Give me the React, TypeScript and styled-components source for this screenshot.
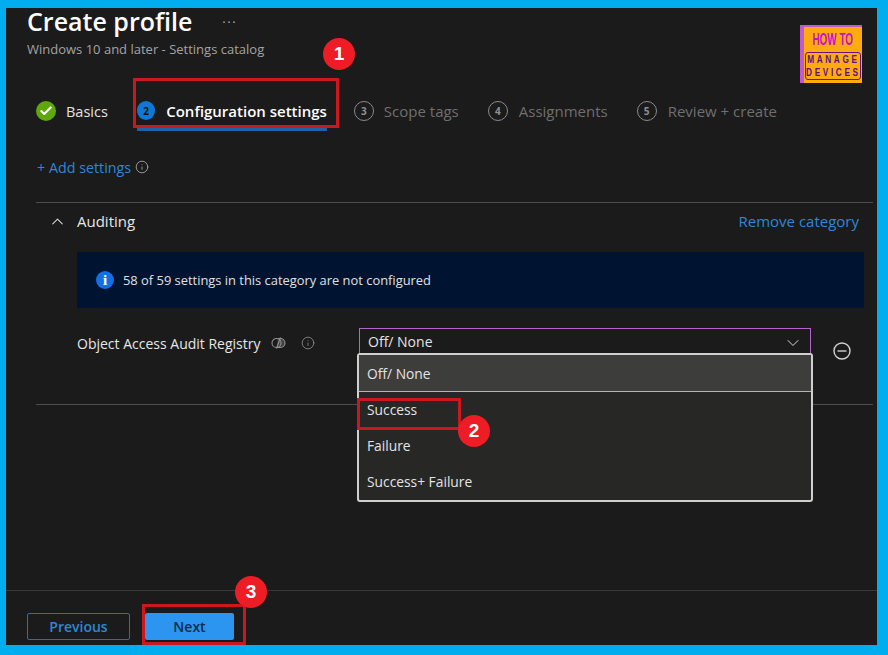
import styled, {createGlobalStyle} from "styled-components";
import {Check, ChevronDown, ChevronUp, Info} from "lucide-react";

const GlobalStyle = createGlobalStyle`
  html, body {
    margin: 0;
    padding: 0;
    background: #00aeef;
    font-family: "Open Sans", "Noto Sans", "Liberation Sans", sans-serif;
  }
`;

const Frame = styled.div`
  width: 888px;
  height: 655px;
  box-sizing: border-box;
  padding: 8px 11px 10px 6px;
  background: #00aeef;
  overflow: hidden;
`;

const Panel = styled.div`
  position: relative;
  height: 100%;
  display: flex;
  flex-direction: column;
  background: #1b1b1b;
  color: #e6e6e6;
`;

const Header = styled.header`
  display: flex;
  justify-content: space-between;
  padding: 0 15px 0 21px;
  height: 85px;
`;

const TitleRow = styled.div`
  display: flex;
  align-items: center;
  gap: 30px;
  height: 29px;
  margin-top: -1px;
`;

const Title = styled.h1`
  margin: 0;
  font-size: 25px;
  line-height: 29px;
  font-weight: 600;
  color: #fff;
`;

const More = styled.span`
  font-size: 13px;
  line-height: 14px;
  letter-spacing: 1.5px;
  color: #a8a8a8;
`;

const Subtitle = styled.div`
  margin-top: 4px;
  font-size: 13px;
  line-height: 18px;
  color: #a3a3a3;
`;

const Logo = styled.div`
  width: 62px;
  height: 58px;
  margin-top: 17px;
  box-sizing: border-box;
  background: #ffab0f;
  border-left: 4px solid #c05ac8;
  border-top: 2px solid #c05ac8;
  display: flex;
  flex-direction: column;
  align-items: center;
  font-family: "Liberation Sans", sans-serif;
  font-weight: 700;
`;

const LogoTop = styled.div`
  margin-top: 5px;
  font-size: 16px;
  line-height: 16px;
  color: #c413c4;
  transform: scaleX(0.62);
  white-space: nowrap;
`;

const LogoBottom = styled.div`
  margin-top: 4px;
  width: 56px;
  height: 28px;
  box-sizing: border-box;
  border: 1px solid #6a1280;
  border-radius: 3px;
  display: flex;
  justify-content: center;
  align-items: center;
  overflow: visible;
`;

const LogoLines = styled.div`
  font-size: 11px;
  line-height: 13px;
  color: #5b0f8a;
  text-align: center;
  letter-spacing: 3.5px;
  white-space: nowrap;
  transform: scaleX(0.75);
`;

const Steps = styled.nav`
  display: flex;
  align-items: center;
  height: 36px;
  padding-left: 30px;
`;

const Step = styled.div<{$gap: number}>`
  display: flex;
  align-items: center;
  height: 36px;
  margin-right: ${p => p.$gap}px;
`;

const StepDone = styled.span`
  width: 20px;
  height: 20px;
  border-radius: 50%;
  background: #5ea80d;
  display: flex;
  align-items: center;
  justify-content: center;
  color: #fff;
`;

const StepActive = styled.span`
  width: 19px;
  height: 19px;
  border-radius: 50%;
  background: #0f78d4;
  display: flex;
  align-items: center;
  justify-content: center;
  font-size: 10px;
  font-weight: 700;
  color: #111;
`;

const StepIdle = styled.span`
  width: 18px;
  height: 18px;
  border-radius: 50%;
  border: 1.5px solid #8a8a8a;
  display: flex;
  align-items: center;
  justify-content: center;
  font-size: 10px;
  font-weight: 700;
  color: #8f8f8f;
`;

const StepLabel = styled.span<{$tone: "done" | "active" | "idle"; $gap: number}>`
  margin-left: ${p => p.$gap}px;
  font-size: ${p => (p.$tone === "done" ? "14.5px" : "15px")};
  white-space: nowrap;
  font-weight: ${p => (p.$tone === "active" ? 600 : 400)};
  color: ${p => (p.$tone === "active" ? "#fff" : p.$tone === "done" ? "#e3e3e3" : "#6f6f6f")};
`;

const ActiveStep = styled(Step)`
  height: 38px;
  margin-top: 2px;
  width: 190px;
  box-sizing: border-box;
  border-bottom: 3px solid #1d62ab;
`;

const AddSettings = styled.div`
  display: flex;
  align-items: center;
  gap: 4px;
  margin: 27px 0 0 31px;
  height: 22px;
  font-size: 14.3px;
  color: #2f86d8;
`;

const InfoIcon = styled(Info)`
  color: #a5a5a5;
  flex: none;
`;

const Category = styled.section`
  margin: 24px 4px 0 30px;
  border-top: 1px solid #4d4d4d;
  border-bottom: 1px solid #4d4d4d;
  height: 201px;
`;

const CategoryHead = styled.div`
  display: flex;
  align-items: center;
  height: 36px;
  padding: 0 14px 0 12px;
  font-size: 15px;
`;

const CategoryName = styled.span`
  margin-left: 10px;
  flex: 1;
  color: #e6e6e6;
`;

const RemoveLink = styled.a`
  color: #2f86d8;
  font-size: 15px;
`;

const Banner = styled.div`
  margin: 13px 9px 0 41px;
  height: 56px;
  background: #001331;
  display: flex;
  align-items: center;
  padding-left: 19px;
  gap: 9px;
  font-size: 12.9px;
  color: #e0e0e0;
`;

const BannerDot = styled.span`
  width: 18px;
  height: 18px;
  border-radius: 50%;
  background: #1470e0;
  color: #fff;
  display: flex;
  align-items: center;
  justify-content: center;
  font-family: "Liberation Serif", serif;
  font-weight: 700;
  font-size: 15px;
`;

const SettingRow = styled.div`
  display: flex;
  align-items: flex-start;
  margin: 20px 0 0 41px;
`;

const SettingLabel = styled.div`
  width: 282px;
  height: 30px;
  display: flex;
  align-items: center;
  font-size: 14px;
  color: #e6e6e6;
`;

const SettingIcons = styled.span`
  display: flex;
  align-items: center;
  gap: 15px;
  margin-left: 10px;
  color: #8f8f8f;
`;

const SelectBox = styled.div`
  position: relative;
  width: 452px;
  height: 30px;
  box-sizing: border-box;
  border: 1px solid #b565c9;
  border-bottom: none;
  display: flex;
  align-items: center;
  justify-content: space-between;
  padding: 0 7px 4px 8px;
  font-size: 14px;
  color: #e3e3e3;
`;

const SelectArrow = styled(ChevronDown)`
  color: #d8d8d8;
  margin-top: 2px;
`;

const Menu = styled.div`
  position: absolute;
  left: -3px;
  top: 24px;
  width: 456px;
  height: 149px;
  box-sizing: border-box;
  border: 2px solid #cfcfcf;
  border-radius: 3px;
  background: #272726;
  z-index: 2;
`;

const MenuItem = styled.div<{$selected?: boolean}>`
  height: 36px;
  box-sizing: ${p => (p.$selected ? "content-box" : "border-box")};
  display: flex;
  align-items: center;
  padding: ${p => (p.$selected ? "0 0 0 8px" : "0 0 2px 8px")};
  font-size: 13.8px;
  color: #e3e3e3;
  background: ${p => (p.$selected ? "#3d3d3b" : "transparent")};
  border-bottom: ${p => (p.$selected ? "1px solid #b5b5b5" : "none")};
`;

const RemoveRow = styled.svg`
  margin: 14px 0 0 22px;
  flex: none;
`;

const Spacer = styled.div`
  flex: 1;
`;

const Footer = styled.footer`
  border-top: 1px solid #383838;
  height: 55px;
  box-sizing: border-box;
  padding: 22px 0 0 21px;
  display: flex;
  gap: 15px;
`;

const PrevButton = styled.button`
  width: 103px;
  height: 27px;
  background: transparent;
  border: 1px solid #2d6ea8;
  border-radius: 2px;
  color: #2f86d8;
  font: 600 14px "Open Sans", sans-serif;
  padding: 0;
`;

const NextButton = styled.button`
  width: 89px;
  height: 27px;
  background: #2b95f0;
  border: none;
  border-radius: 2px;
  color: #0f2c4a;
  font: 600 14px "Open Sans", sans-serif;
  padding: 0;
`;

const Badge = styled.span<{$x: number; $y: number}>`
  position: absolute;
  left: ${p => p.$x}px;
  top: ${p => p.$y}px;
  width: 32px;
  height: 32px;
  border-radius: 50%;
  background: #ee1c25;
  color: #fff;
  display: flex;
  align-items: center;
  justify-content: center;
  font: 700 19px "Liberation Sans", sans-serif;
  z-index: 4;
`;

const Callout = styled.span<{$x: number; $y: number; $w: number; $h: number}>`
  position: absolute;
  left: ${p => p.$x}px;
  top: ${p => p.$y}px;
  width: ${p => p.$w}px;
  height: ${p => p.$h}px;
  box-sizing: border-box;
  border: 3px solid #c9181e;
  z-index: 3;
`;

function Minus() {
  return (
    <RemoveRow width="18" height="18" viewBox="0 0 18 18" fill="none" stroke="#d0d0d0" strokeWidth="1.4">
      <circle cx="9" cy="9" r="8"/>
      <path d="M4.5 9h9"/>
    </RemoveRow>
  );
}

function Shared() {
  return (
    <svg width="15" height="14" viewBox="0 0 15 14" fill="none" stroke="#8f8f8f" strokeWidth="1.1">
      <circle cx="5.5" cy="7" r="4.5"/>
      <path d="M7 2.5h2.5a4.5 4.5 0 0 1 0 9H5.5" fill="#8f8f8f" fillOpacity="0.35"/>
      <path d="M5.5 12.5 9.5 1.5"/>
    </svg>
  );
}

export default function App() {
  return (
    <Frame>
      <GlobalStyle/>
      <Panel>
        <Header>
          <div>
            <TitleRow>
              <Title>Create profile</Title>
              <More>···</More>
            </TitleRow>
            <Subtitle>Windows 10 and later - Settings catalog</Subtitle>
          </div>
          <Logo>
            <LogoTop>HOW TO</LogoTop>
            <LogoBottom>
              <LogoLines>MANAGE<br/>DEVICES</LogoLines>
            </LogoBottom>
          </Logo>
        </Header>
        <Steps>
          <Step $gap={29}>
            <StepDone><Check size={14} strokeWidth={3.5}/></StepDone>
            <StepLabel $tone="done" $gap={10}>Basics</StepLabel>
          </Step>
          <ActiveStep $gap={27}>
            <StepActive>2</StepActive>
            <StepLabel $tone="active" $gap={11}>Configuration settings</StepLabel>
          </ActiveStep>
          <Step $gap={29}>
            <StepIdle>3</StepIdle>
            <StepLabel $tone="idle" $gap={10}>Scope tags</StepLabel>
          </Step>
          <Step $gap={29}>
            <StepIdle>4</StepIdle>
            <StepLabel $tone="idle" $gap={11}>Assignments</StepLabel>
          </Step>
          <Step $gap={0}>
            <StepIdle>5</StepIdle>
            <StepLabel $tone="idle" $gap={11}>Review + create</StepLabel>
          </Step>
        </Steps>
        <AddSettings>
          <span>+ Add settings</span>
          <InfoIcon size={14} strokeWidth={1.5}/>
        </AddSettings>
        <Category>
          <CategoryHead>
            <ChevronUp size={19} strokeWidth={1.3} color="#d8d8d8"/>
            <CategoryName>Auditing</CategoryName>
            <RemoveLink>Remove category</RemoveLink>
          </CategoryHead>
          <Banner>
            <BannerDot>i</BannerDot>
            <span>58 of 59 settings in this category are not configured</span>
          </Banner>
          <SettingRow>
            <SettingLabel>
              Object Access Audit Registry
              <SettingIcons>
                <Shared/>
                <Info size={14} strokeWidth={1.4}/>
              </SettingIcons>
            </SettingLabel>
            <SelectBox>
              Off/ None
              <SelectArrow size={20} strokeWidth={1.2}/>
              <Menu>
                <MenuItem $selected>Off/ None</MenuItem>
                <MenuItem>Success</MenuItem>
                <MenuItem>Failure</MenuItem>
                <MenuItem>Success+ Failure</MenuItem>
              </Menu>
            </SelectBox>
            <Minus/>
          </SettingRow>
        </Category>
        <Spacer/>
        <Footer>
          <PrevButton>Previous</PrevButton>
          <NextButton>Next</NextButton>
        </Footer>
        <Callout $x={127} $y={70} $w={206} $h={50}/>
        <Badge $x={317} $y={30}>1</Badge>
        <Callout $x={351} $y={390} $w={104} $h={32}/>
        <Badge $x={452} $y={407}>2</Badge>
        <Callout $x={136} $y={596} $w={104} $h={41}/>
        <Badge $x={229} $y={568}>3</Badge>
      </Panel>
    </Frame>
  );
}
